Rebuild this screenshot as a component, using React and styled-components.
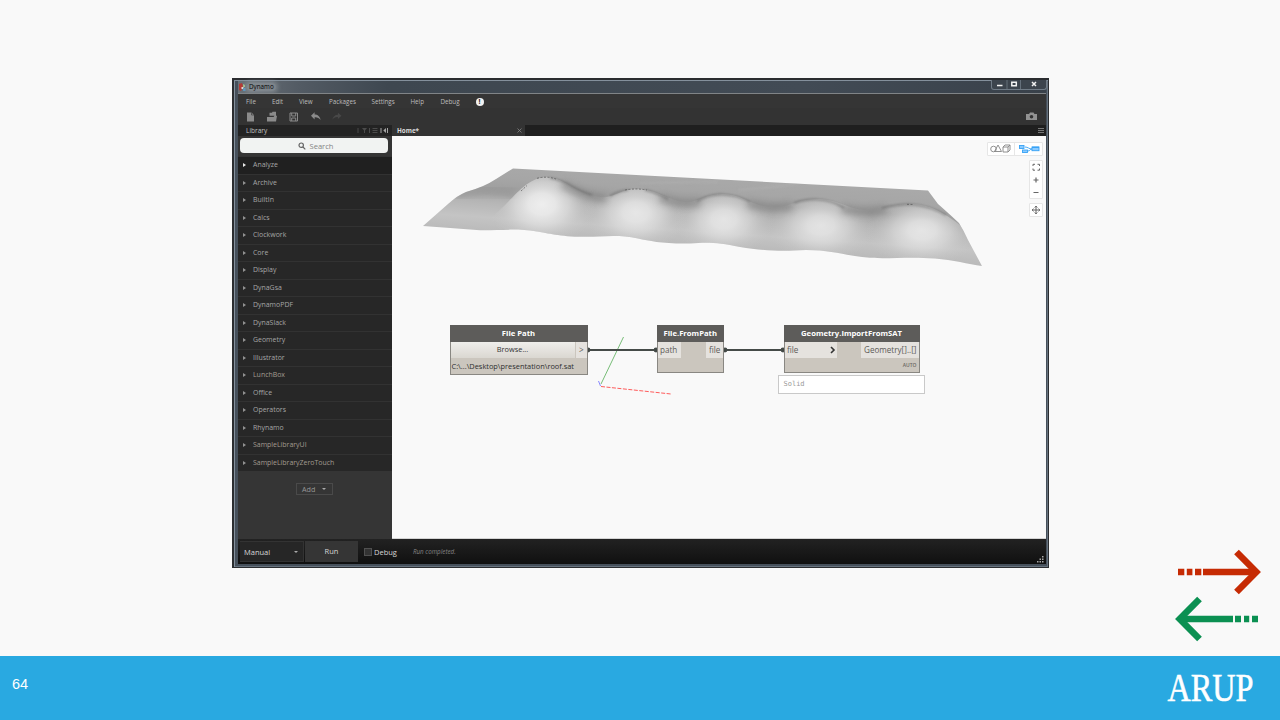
import React from "react";
import styled, { createGlobalStyle } from "styled-components";

const Global = createGlobalStyle`
  * { box-sizing: border-box; }
  body { margin: 0; background: #f9f9f9; overflow: hidden; }
  svg { display: block; flex: none; }
`;

const Slide = styled.main`
  width: 1280px;
  height: 720px;
  display: flex;
  flex-direction: column;
  background: #f9f9f9;
  font-family: "Open Sans", "Noto Sans", sans-serif;
`;
const Stage = styled.section`
  height: 656px;
  display: grid;
  grid-template-columns: 817px 1fr;
  padding: 78px 18px 0 232px;
`;
const Arrows = styled.nav`
  align-self: end;
  justify-self: end;
  padding-bottom: 13px;
`;
const Banner = styled.footer`
  height: 64px;
  background: #29a9e1;
  color: #fff;
  display: flex;
  justify-content: space-between;
  align-items: center;
  padding: 0 24px 0 12px;
  font: 14.5px "Liberation Sans", sans-serif;
`;
const PageNumber = styled.span`
  padding-bottom: 8px;
`;
const Logo = styled.svg`
  overflow: visible;
`;

const Window = styled.article`
  width: 817px;
  height: 490px;
  border: 2px solid #2b2d30;
  border-right-width: 1px;
  border-bottom-width: 1px;
  background: #46505b;
  box-shadow: inset 1px 1px 0 #84909c, inset -1px -1px 0 #66727e;
  padding: 0 2px 3px 4px;
  display: flex;
  flex-direction: column;
`;
const TitleBar = styled.header`
  height: 12px;
  display: flex;
  align-items: center;
  padding-left: 1px;
  margin-top: 1px;
  background: linear-gradient(90deg, #6a7178 0, #535b64 60px, #3e4750 150px, #424b55 70%, #39414a);
  color: #050505;
  font-size: 6.3px;
`;
const TitleText = styled.span`
  margin: 0 0 0 1px;
  padding: 0 2px;
  line-height: 8px;
  border-radius: 5px;
  background: rgba(170, 176, 182, 0.42);
  box-shadow: 0 0 4px 2px rgba(170, 176, 182, 0.42);
`;
const Caption = styled.div`
  display: flex;
  align-self: flex-start;
  height: 10px;
  width: 56px;
  margin: -1px -1px 0 auto;
  border: 1px solid #707b86;
  border-top: 0;
  border-radius: 0 0 3px 3px;
  background: #3c444d;
`;
const Client = styled.div`
  flex: 1;
  min-height: 0;
  display: flex;
  flex-direction: column;
  background: #353535;
  border-top: 1px solid #808487;
`;
const MenuBar = styled.div`
  height: 14px;
  display: flex;
  align-items: center;
  padding: 1px 0 0 8px;
  font-size: 6.25px;
  color: #bdbdbd;
`;
const MenuItem = styled.span`
  width: ${(p) => p.$w}px;
  line-height: 12px;
  white-space: nowrap;
`;
const Alert = styled.span`
  width: 8px;
  height: 8px;
  border-radius: 50%;
  background: #f2f2f2;
  color: #222;
  font: bold 7px/8px "Open Sans", sans-serif;
  text-align: center;
`;
const ToolBar = styled.div`
  height: 17px;
  display: flex;
  align-items: center;
  justify-content: space-between;
  padding: 0 9px 0 8px;
  background: #333;
`;
const TabRow = styled.div`
  height: 11px;
  display: flex;
  background: #1f1f1f;
`;
const LibraryTitle = styled.div`
  width: 154px;
  display: flex;
  justify-content: space-between;
  align-items: center;
  padding: 0 3px 0 8px;
  background: #232323;
  color: #c4c4c4;
  font-size: 6.5px;
  line-height: 10px;
`;
const Tab = styled.div`
  width: 133px;
  display: flex;
  align-items: center;
  justify-content: space-between;
  padding: 0 3px 0 5px;
  background: #333;
  color: #dadada;
  font-size: 6.3px;
  font-weight: 700;
  line-height: 10px;
`;
const TabMenu = styled.div`
  margin: 3px 2px 0 auto;
  width: 6px;
  height: 6px;
  background: repeating-linear-gradient(#777 0 1px, transparent 1px 2px);
`;
const Body = styled.div`
  flex: 1;
  min-height: 0;
  display: flex;
`;
const Sidebar = styled.aside`
  width: 154px;
  background: #353535;
`;
const Search = styled.div`
  height: 15px;
  margin: 2px 4px 3px 2px;
  border-radius: 4px;
  background: #f1f3f2;
  color: #848484;
  display: flex;
  align-items: center;
  justify-content: center;
  gap: 3px;
  padding-left: 4px;
  font-size: 7.6px;
`;
const LibraryList = styled.ul`
  list-style: none;
  margin: 0;
  padding: 0;
  background: #272727;
`;
const LibraryItem = styled.li`
  height: 17.5px;
  display: flex;
  align-items: center;
  gap: 6px;
  padding-left: 5px;
  border-top: 1px solid #323232;
  background: ${(p) => (p.$active ? "#202020" : "#272727")};
  color: ${(p) => (p.$warm ? "#a39b90" : "#a6a6a6")};
  font-size: 6.95px;
  line-height: 10px;
  &::before {
    content: "";
    border: 1.5px solid transparent;
    border-left: 3px solid ${(p) => (p.$active ? "#e8e8e8" : "#929292")};
    border-width: 2px 0 2px 3px;
    margin-right: 1px;
  }
`;
const AddButton = styled.div`
  width: 37px;
  height: 12.5px;
  margin: 11.5px auto 0 58px;
  border: 1px solid #4a4a4a;
  color: #979797;
  font-size: 7.2px;
  display: flex;
  align-items: center;
  justify-content: space-between;
  padding: 0 6px 0 5px;
`;
const Caret = styled.i`
  border: ${(p) => p.$s}px solid transparent;
  border-top-color: #aaa;
  border-bottom: 0;
`;
const Canvas = styled.div`
  position: relative;
  flex: 1;
  overflow: hidden;
  background: #f9f9f9;
  border-bottom: 1px solid #d4d4d4;
`;
const Scene = styled.svg`
  position: absolute;
  inset: 0;
`;
const Controls = styled.div`
  position: absolute;
  right: 3px;
  top: 6px;
  display: flex;
  flex-direction: column;
  align-items: flex-end;
  gap: 4px;
`;
const Panel = styled.div`
  display: flex;
  background: #fff;
  border: 1px solid #e6e6e6;
  border-radius: 1px;
`;
const Node = styled.div`
  position: absolute;
  left: ${(p) => p.$x}px;
  top: 189px;
  width: ${(p) => p.$w}px;
  height: ${(p) => p.$h}px;
  background: #cbc6be;
  border: 1px solid #898782;
  border-top: 0;
`;
const NodeTitle = styled.div`
  height: 17px;
  margin: 0 -1px;
  background: #5d5c5a;
  color: #fff;
  font-size: 7.7px;
  font-weight: 700;
  line-height: 17px;
  text-align: center;
`;
const PortRow = styled.div`
  display: flex;
  justify-content: space-between;
  height: 15.5px;
`;
const Port = styled.div`
  width: ${(p) => p.$w}px;
  display: flex;
  justify-content: space-between;
  align-items: center;
  padding: ${(p) => (p.$out ? "0 2px 0 3.5px" : "0 1px 0 2.5px")};
  background: #e5e2de;
  color: #5d5b58;
  font-size: 8.1px;
  white-space: nowrap;
`;
const Browse = styled.div`
  flex: 1;
  margin-right: 1px;
  background: linear-gradient(#efeeeb, #dad7d1);
  color: #333;
  font-size: 7.4px;
  line-height: 14px;
  text-align: center;
`;
const PathText = styled.div`
  padding-left: 1px;
  color: #2e2e2e;
  font-size: 7.4px;
  line-height: 17px;
  white-space: nowrap;
`;
const Lacing = styled.div`
  padding-right: 2px;
  text-align: right;
  color: #6a6762;
  font-size: 5px;
  font-weight: 600;
  line-height: 15px;
`;
const Watch = styled.div`
  position: absolute;
  left: 386px;
  top: 239px;
  width: 147px;
  height: 19px;
  padding: 3px 4.5px;
  background: #fff;
  border: 1px solid #c9c9c9;
  color: #999;
  font: 7px/10px "DejaVu Sans Mono", monospace;
`;
const StatusBar = styled.div`
  height: 25px;
  display: flex;
  align-items: center;
  padding: 1px 2px 1px;
  background: linear-gradient(#222, #101010);
  color: #d6d6d6;
  font-size: 7.5px;
`;
const RunMode = styled.div`
  width: 64px;
  height: 21px;
  display: flex;
  align-items: center;
  justify-content: space-between;
  padding: 0 5px 0 4px;
  background: #262626;
  border: 1px solid #333;
  border-left: 0;
`;
const RunButton = styled.div`
  width: 53px;
  height: 21px;
  margin-left: 1px;
  line-height: 21px;
  text-align: center;
  background: #353535;
`;
const Check = styled.i`
  width: 8px;
  height: 8px;
  margin: 0 2px 0 6px;
  background: #333;
  border: 1px solid #505050;
`;
const Status = styled.em`
  margin-left: 16px;
  color: #858585;
  font-size: 6.25px;
`;
const Grip = styled.svg`
  margin: auto 0 0 auto;
`;

const MENU = [["File", 26], ["Edit", 27], ["View", 30], ["Packages", 42.5], ["Settings", 39], ["Help", 30], ["Debug", 35]];
const LIBRARY = ["Analyze", "Archive", "BuiltIn", "Calcs", "Clockwork", "Core", "Display", "DynaGsa", "DynamoPDF", "DynaSlack", "Geometry", "Illustrator", "LunchBox", "Office", "Operators", "Rhynamo", "SampleLibraryUI", "SampleLibraryZeroTouch"];

const BUMPS = [
  { x: 542, y: 204, rx: 54, ry: 43, o: 0.95 },
  { x: 636, y: 212, rx: 52, ry: 40, o: 0.82 },
  { x: 724, y: 219, rx: 50, ry: 38, o: 0.78 },
  { x: 821, y: 225, rx: 54, ry: 38, o: 0.76 },
  { x: 922, y: 230, rx: 56, ry: 38, o: 0.8 },
];
const OUTLINE =
  "M423 226 L448 204 Q458 195 466 192 Q484 187 496 179 L513 168.5 L928 190.5 L938 204 Q945 210 959 223 Q964 231 968 240 L982 266 C968 264 953 260 935 258.5 C905 256 885 260 862 257 C838 254 830 250 806 250 C777 252 760 250 740 247 C719 243 711 242 690 243.5 C663 244 650 241 638 238.5 C617 234 602 237 585 236.8 C560 237 548 233 537 231.5 C516 228 500 230.5 480 230.2 Q450 228 423 226Z";
const CREST =
  "M484 222 C512 205 522 177 548 177 C565 178 575 194 600 197 C612 199 620 189 637 189 C656 189 669 201 686 202 C699 202 706 194 723 194 C743 194 750 206 772 207 C790 208 796 199 818 199 C838 199 849 210 867 210 C881 210 890 204 912 204 C930 204 946 214 961 226 L985 272 L420 262 L440 232Z";

function Surface() {
  return (
    <g>
      <defs>
        <clipPath id="outline"><path d={OUTLINE} /></clipPath>
        <clipPath id="crest"><path d={CREST} /></clipPath>
        <linearGradient id="back" gradientUnits="userSpaceOnUse" x1="700" y1="176" x2="695" y2="250">
          <stop offset="0" stopColor="#a9a9a9" />
          <stop offset=".2" stopColor="#a6a6a6" />
          <stop offset=".34" stopColor="#a0a0a0" />
          <stop offset=".55" stopColor="#b6b6b6" />
          <stop offset=".75" stopColor="#c4c4c4" />
          <stop offset="1" stopColor="#b7b7b7" />
        </linearGradient>
        <radialGradient id="light">
          <stop offset="0" stopColor="#f1f1f1" />
          <stop offset=".25" stopColor="#eeeeee" stopOpacity=".92" />
          <stop offset=".5" stopColor="#e4e4e4" stopOpacity=".68" />
          <stop offset=".75" stopColor="#d6d6d6" stopOpacity=".3" />
          <stop offset="1" stopColor="#cccccc" stopOpacity="0" />
        </radialGradient>
        <filter id="soft" x="-20%" y="-100%" width="140%" height="300%"><feGaussianBlur stdDeviation="3" /></filter>
        <filter id="fine" x="-20%" y="-100%" width="140%" height="300%"><feGaussianBlur stdDeviation="1" /></filter>
      </defs>
      <g clipPath="url(#outline)">
        <rect x="420" y="160" width="570" height="112" fill="url(#back)" />
        <path d="M455 195 Q485 188 516 194" fill="none" stroke="#8d8d8d" strokeWidth="8" opacity=".5" filter="url(#soft)" />
        <g clipPath="url(#crest)">
          {BUMPS.map((b) => <ellipse key={b.x} cx={b.x} cy={b.y} rx={b.rx} ry={b.ry} fill="url(#light)" opacity={b.o} />)}
        </g>
        <path d="M562 184 Q583 196 606 199 M660 198 Q682 206 700 202 M748 204 Q772 210 792 206 M842 209 Q864 214 886 209" fill="none" stroke="#7b7b7b" strokeWidth="8" opacity=".55" filter="url(#soft)" />
        <path d="M550 178 Q562 180 573 187 Q580 191 592 195 M610 196 Q618 191 628 190 M645 190 Q655 192 668 199 M697 201 Q710 194 723 194.5 Q738 195 750 202 M794 203 Q805 199 817 199.5 Q832 200 844 208 M882 208 Q898 204 912 204.5 Q930 206 946 215" fill="none" stroke="#606060" strokeWidth="1.7" opacity=".55" filter="url(#fine)" />
        <path d="M640 183 Q690 182 718 182 M738 190 Q770 188 800 183" fill="none" stroke="#b5b5b5" strokeWidth="3" opacity=".3" filter="url(#fine)" />
      </g>
      <path d="M521 191 L527 185.5 M537 178.3 Q547 175.8 556 179 M625 190 Q636 188 647 190 M907 204.3 L913 204.5" fill="none" stroke="#444" strokeWidth=".6" strokeDasharray="2 1.5" />
    </g>
  );
}

function SceneDrawing() {
  return (
    <Scene width="654" height="402" viewBox="392 136 654 402">
      <Surface />
      <path d="M601 384 L623.5 337" stroke="#77bd77" />
      <path d="M601 386.5 L671 394" stroke="#ff5c5c" strokeDasharray="4 1.5" />
      <path d="M598.5 381 L600.5 386" stroke="#8888ff" />
      <g stroke="#454b48" strokeWidth="1.8" fill="#3b403e">
        <path d="M588 350H656M725 350H783" />
        {[588, 656, 725, 783].map((x) => <circle key={x} cx={x} cy="350" r="1.5" />)}
      </g>
    </Scene>
  );
}

function ToolIcons() {
  return (
    <svg width="106" height="14" viewBox="246 110 106 14" fill="#8b8b8b">
      <path d="M247 112.5h4.5l2.5 2.5v6.5h-7z" />
      <path d="M251.5 112.5v2.5h2.5" stroke="#333" strokeWidth=".6" fill="none" />
      <path d="M269.5 112.8h2.5l.5-1h3.500v4h-6.500zM267 117h6.500l1-1.300h2.500l-1 5.800h-9z" />
      <path d="M290 113h7.500v8h-7.500zM291.700 113v3h4v-3M291.700 121v-3h4v3" fill="none" stroke="#8b8b8b" />
      <path d="M311 115.700l3.600-3.500v2.300c3 0 5.500 2 6 5.500-1.700-2-3.300-2.800-6-2.600v2z" />
      <path d="M341.500 115.700l-3.600-3v2c-3 0-5 2-5.600 5 1.700-2 3-2.800 5.600-2.600v2z" fill="#484848" />
    </svg>
  );
}

function NavArrows() {
  return (
    <svg width="88" height="94" viewBox="1174 549 88 94">
      <g fill="#c62b04">
        <path d="M1178 568.7h6.3v6.6h-6.3zM1186.8 568.7h5.6v6.6h-5.6zM1195 568.7h6.3v6.6h-6.3zM1203 568.7h51v6.6h-51z" />
        <path d="M1236.5 552 L1256.3 572 L1236.5 592" fill="none" stroke="#c62b04" strokeWidth="6.6" />
      </g>
      <g fill="#0b9052">
        <path d="M1182 615.7h51v6.6h-51zM1235 615.7h6v6.6h-6zM1244 615.7h5.2v6.6h-5.2zM1252 615.7h6v6.6h-6z" />
        <path d="M1199.5 599 L1179.7 619 L1199.5 639" fill="none" stroke="#0b9052" strokeWidth="6.6" />
      </g>
    </svg>
  );
}

function CanvasControls() {
  return (
    <Controls>
      <Panel>
        <svg width="54" height="12" viewBox="988 143 54 12" fill="none" stroke="#858585" strokeWidth=".9">
          <circle cx="993.5" cy="149" r="2.8" />
          <path d="M998 145l3.5 6.5h-7z" />
          <path d="M1003 147h5v5h-5zM1003 147l2-2h5v5l-2 2M1008 147l2-2" />
          <path d="M1014.5 142v14" stroke="#e4e4e4" />
          <g stroke="#36a2f5" fill="#8ccbff">
            <rect x="1019.5" y="145.5" width="4.5" height="3" />
            <rect x="1022.5" y="150" width="5" height="2.5" />
            <rect x="1032" y="147" width="7" height="3.7" />
            <path d="M1032 147.3h7" strokeWidth="1.3" />
            <path d="M1025 147c3 0 4 2 7 2M1028 151c2 0 2-2 4-2" fill="none" />
          </g>
        </svg>
      </Panel>
      <Panel>
        <svg width="12" height="37" viewBox="1030 161 12 37" fill="none" stroke="#666">
          <path d="M1033 166v-1.7h2M1037.5 164.3h2v1.7M1039.5 168.5v1.7h-2M1035 170.2h-2v-1.7" />
          <path d="M1033.5 180h5M1036 177.5v5M1033.5 192.5h5" strokeWidth="1.2" />
        </svg>
      </Panel>
      <Panel>
        <svg width="12" height="12" viewBox="0 0 12 12" fill="none" stroke="#666">
          <path d="M6 2v8M2 6h8M4.7 3.5l1.3-1.4 1.3 1.4M4.7 8.5l1.3 1.4 1.3-1.4M3.5 4.7l-1.4 1.3 1.4 1.3M8.5 4.7l1.4 1.3-1.4 1.3" />
        </svg>
      </Panel>
    </Controls>
  );
}

function DynamoWindow() {
  return (
    <Window>
      <TitleBar>
        <svg width="7" height="9" viewBox="0 0 7 9">
          <path d="M0 1l3-1 1 3-2 5-2-1z" fill="#b53a34" />
          <path d="M4 1l2 1v2H4z" fill="#9bbd8c" />
          <path d="M2.5 4h2v2h-2z" fill="#e3ded8" />
          <path d="M4 5h2.5v3H4z" fill="#5893bd" />
        </svg>
        <TitleText>Dynamo</TitleText>
        <Caption>
          <svg width="54" height="9" viewBox="0 0 54 9" fill="none" stroke="#f2f2f2" strokeWidth="1.5">
            <path d="M5 5.500h5.500" />
            <path d="M19.8 2.2h4.5v3.5h-4.5z" />
            <path d="M40 2l4 4M44 2l-4 4" />
            <path d="M15 0v9M28.5 0v9" stroke="#65707b" strokeWidth="1" />
          </svg>
        </Caption>
      </TitleBar>
      <Client>
        <MenuBar>
          {MENU.map(([label, w]) => <MenuItem key={label} $w={w}>{label}</MenuItem>)}
          <Alert>!</Alert>
        </MenuBar>
        <ToolBar>
          <ToolIcons />
          <svg width="11" height="9" viewBox="0 0 11 9">
            <path d="M0 2h3l1-1.5h3.5L8.5 2H11v6H0z" fill="#929292" />
            <circle cx="5.5" cy="4.8" r="1.8" fill="#333" />
          </svg>
        </ToolBar>
        <TabRow>
          <LibraryTitle>
            Library
            <svg width="32" height="7" viewBox="0 0 32 7" fill="#4b4b4b">
              <path d="M.5 1h1v5h-1zM5 1h5L8 3.5V6H7V3.5zM12 1h1v5h-1zM15.5 1h5v1h-5zM15.5 3h5v1h-5zM15.5 5h5v1h-5z" />
              <path d="M23.5 1h1v5h-1zM29 1v5l-2.7-2.5zM30 1h1v5h-1z" fill="#a5a5a5" />
            </svg>
          </LibraryTitle>
          <Tab>
            Home*
            <svg width="5" height="5" viewBox="0 0 5 5" stroke="#858585" strokeWidth=".8"><path d="M.5 .5l4 4M4.5 .5l-4 4" /></svg>
          </Tab>
          <TabMenu />
        </TabRow>
        <Body>
          <Sidebar>
            <Search>
              <svg width="8" height="8" viewBox="0 0 8 8" fill="none" stroke="#666" strokeWidth="1.2"><circle cx="3.2" cy="3.2" r="2.2" /><path d="M5 5l2.3 2.3" /></svg>
              Search
            </Search>
            <LibraryList>
              {LIBRARY.map((name, i) => <LibraryItem key={name} $active={i === 0} $warm={i > 15 || name === "LunchBox"}>{name}</LibraryItem>)}
            </LibraryList>
            <AddButton>Add<Caret $s={2} /></AddButton>
          </Sidebar>
          <Canvas>
            <SceneDrawing />
            <Node $x={57.5} $w={138} $h={50}>
              <NodeTitle>File Path</NodeTitle>
              <PortRow><Browse>Browse...</Browse><Port $out $w={11}>&gt;</Port></PortRow>
              <PathText>C:\...\Desktop\presentation\roof.sat</PathText>
            </Node>
            <Node $x={264.5} $w={67.5} $h={48}>
              <NodeTitle>File.FromPath</NodeTitle>
              <PortRow><Port $w={23.5}>path</Port><Port $out $w={17.5}>file</Port></PortRow>
            </Node>
            <Node $x={391.5} $w={136} $h={48}>
              <NodeTitle>Geometry.ImportFromSAT</NodeTitle>
              <PortRow>
                <Port $w={52}>
                  file
                  <svg width="6" height="8" viewBox="0 0 6 8" fill="none" stroke="#333" strokeWidth="1.6"><path d="M1 1l3 3-3 3" /></svg>
                </Port>
                <Port $out $w={58}>Geometry[]..[]</Port>
              </PortRow>
              <Lacing>AUTO</Lacing>
            </Node>
            <Watch>Solid</Watch>
            <CanvasControls />
          </Canvas>
        </Body>
        <StatusBar>
          <RunMode>Manual<Caret $s={2} /></RunMode>
          <RunButton>Run</RunButton>
          <Check />
          Debug
          <Status>Run completed.</Status>
          <Grip width="7" height="7" viewBox="0 0 7 7" fill="#aaa">
            <path d="M5 0h1.5v1.5H5zM5 2.5h1.5V4H5zM5 5h1.5v1.5H5zM2.5 2.5H4V4H2.5zM2.5 5H4v1.5H2.5zM0 5h1.5v1.5H0z" />
          </Grip>
        </StatusBar>
      </Client>
    </Window>
  );
}

export default function App() {
  return (
    <Slide>
      <Global />
      <Stage>
        <DynamoWindow />
        <Arrows><NavArrows /></Arrows>
      </Stage>
      <Banner>
        <PageNumber>64</PageNumber>
        <Logo width="90" height="64" viewBox="0 0 90 64">
          <text x="1.5" y="44.5" textLength="86" lengthAdjust="spacingAndGlyphs" fontFamily="Liberation Serif, serif" fontSize="39" fill="#fff" stroke="#fff" strokeWidth=".6">ARUP</text>
        </Logo>
      </Banner>
    </Slide>
  );
}
